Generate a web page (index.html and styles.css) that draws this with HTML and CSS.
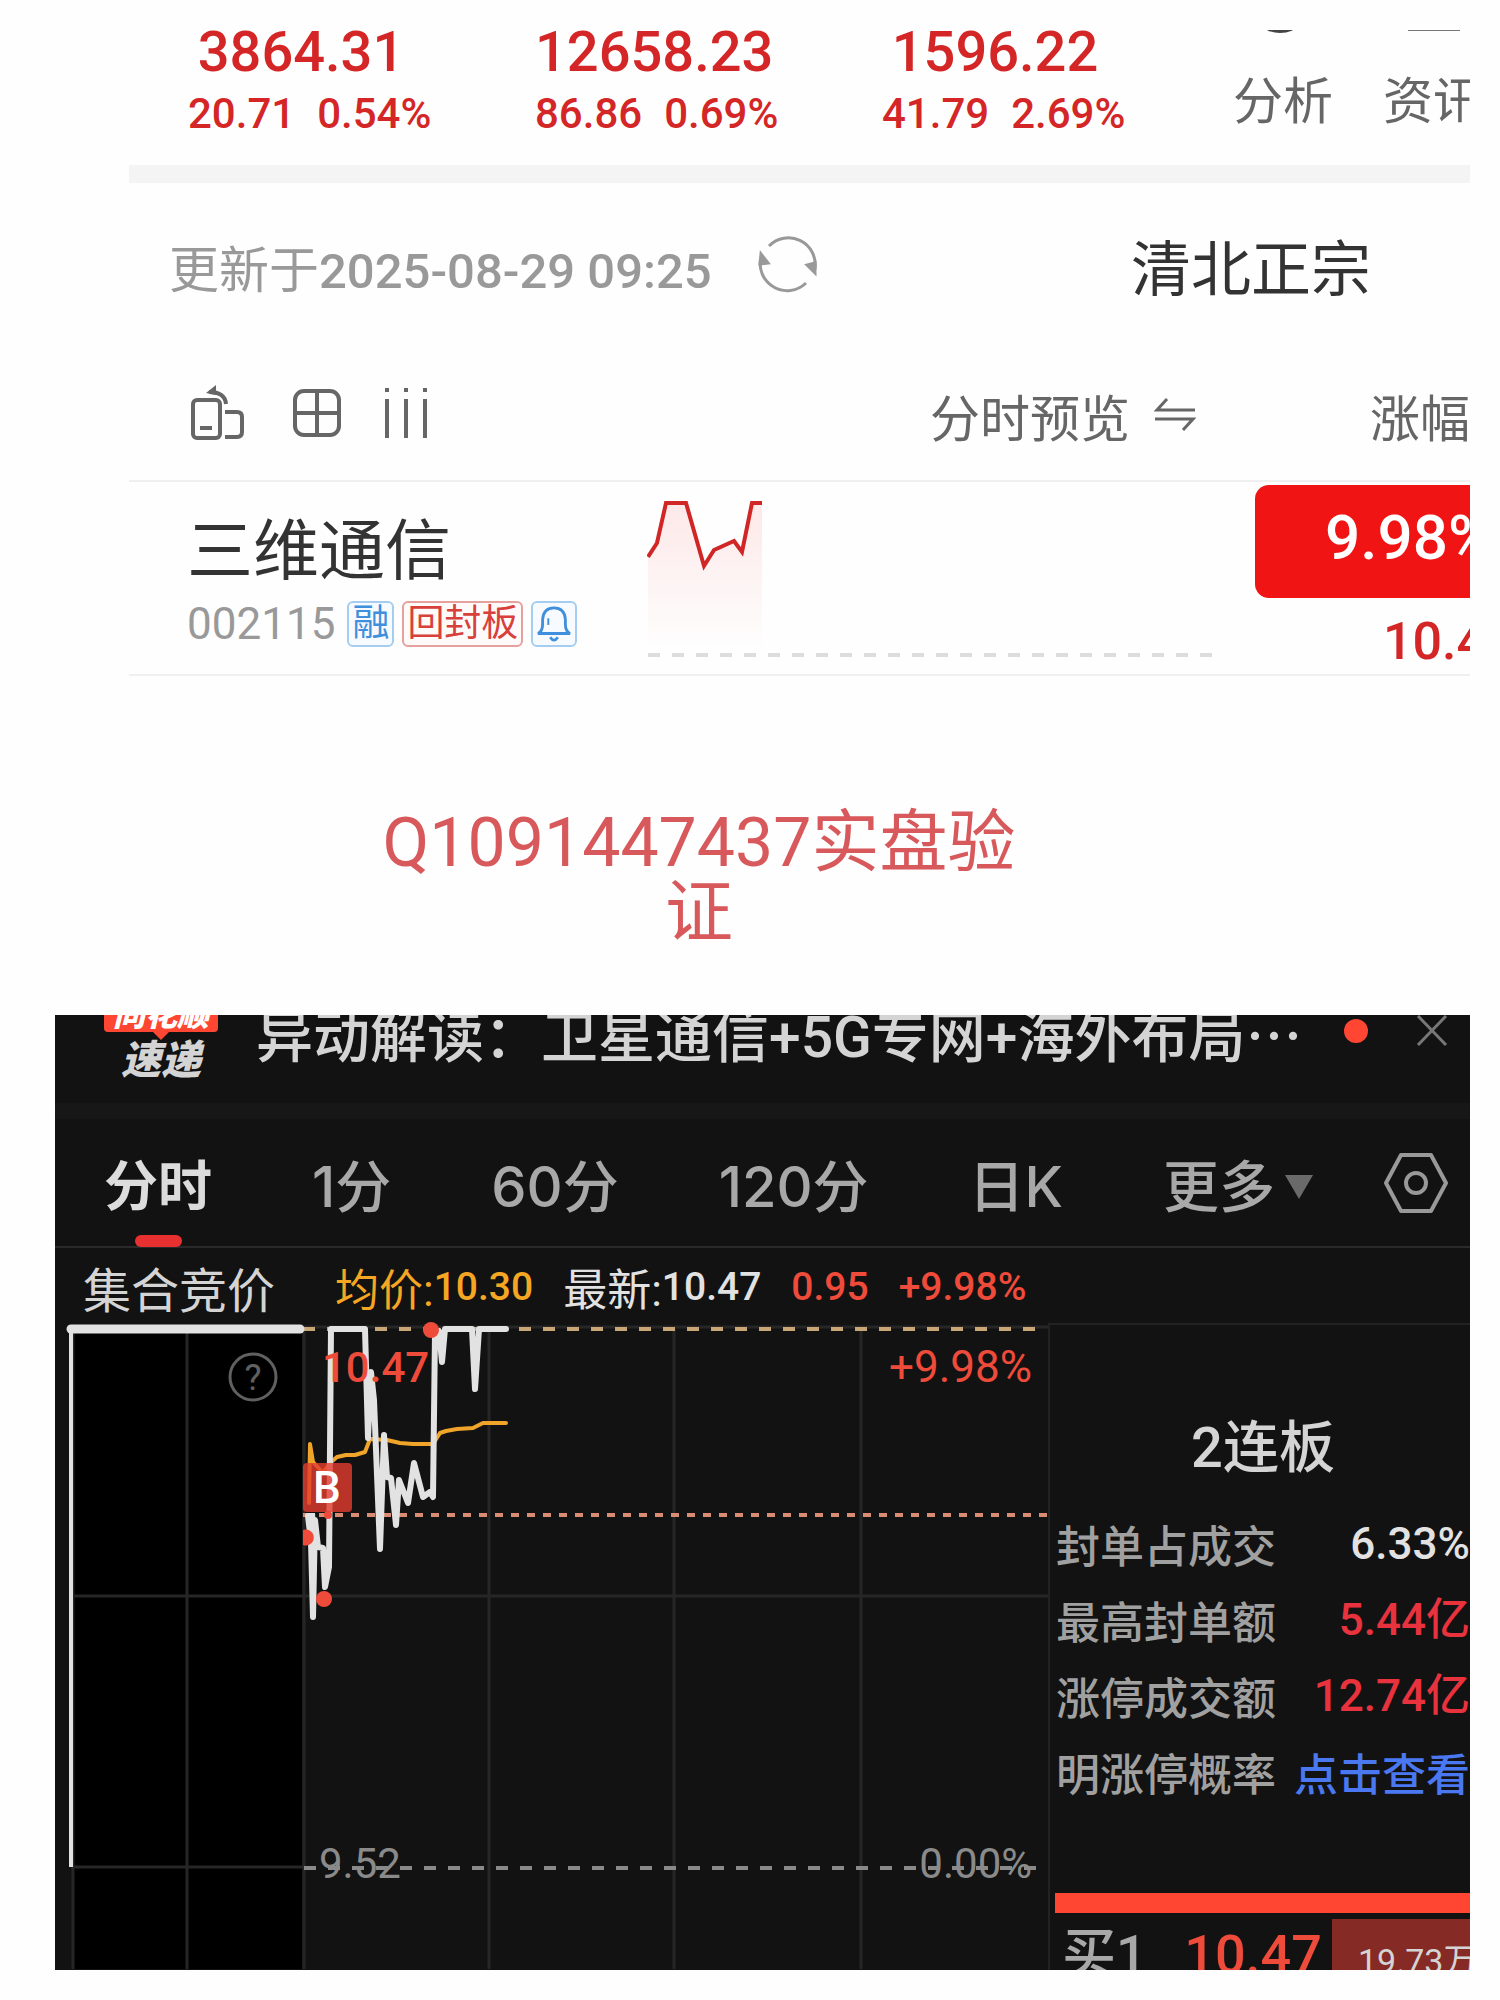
FILE: index.html
```html
<!DOCTYPE html>
<html lang="zh-CN">
<head>
  <meta charset="UTF-8">
  <meta name="viewport" content="width=device-width, initial-scale=1.0">
  <title>三维通信 002115</title>
  <link rel="stylesheet" href="styles.css">
</head>
<body>
  <div class="page">
    <section class="watchlist">
      <div class="market">
        <div class="index">
          <div class="index-value">3864.31</div>
          <div class="index-change"><span>20.71</span><span>0.54%</span></div>
        </div>
        <div class="index">
          <div class="index-value">12658.23</div>
          <div class="index-change"><span>86.86</span><span>0.69%</span></div>
        </div>
        <div class="index">
          <div class="index-value">1596.22</div>
          <div class="index-change"><span>41.79</span><span>2.69%</span></div>
        </div>
        <a class="shortcut" href="#">
          <svg width="60" height="5" viewBox="0 0 60 5"><circle cx="30" cy="-28" r="31" fill="#444"/></svg>
          分析
        </a>
        <a class="shortcut" href="#">
          <svg width="60" height="5" viewBox="0 0 60 5"><path d="M8 0H60" stroke="#777" stroke-width="2"/></svg>
          资讯
        </a>
      </div>

      <div class="update">
        <span class="update-time">更新于<b>2025-08-29 09:25</b></span>
        <button class="icon-btn" aria-label="刷新">
          <svg width="60" height="58" viewBox="0 0 60 58" fill="none" stroke="#999" stroke-width="3">
            <path d="M11 11A27 27 0 0 1 57 34"/>
            <path d="M48 48A27 27 0 0 1 3 22"/>
            <path d="M49 30L57 38L57 28Z" fill="#999"/>
            <path d="M10 28L3 19L2 29Z" fill="#999"/>
          </svg>
        </button>
        <span class="group-name">清北正宗</span>
      </div>

      <div class="columns">
        <button class="icon-btn" aria-label="横屏">
          <svg width="54" height="56" viewBox="0 0 54 56" fill="none" stroke="#666" stroke-width="4">
            <rect x="2" y="15" width="27" height="38" rx="4"/>
            <path d="M9 43H21M34 27H46Q51 27 51 32V47Q51 52 46 52H34"/>
            <path d="M18 7Q34 7 35 19"/>
            <path d="M25 0L15 8L25 10Z" fill="#666" stroke="none"/>
          </svg>
        </button>
        <button class="icon-btn" aria-label="宫格">
          <svg width="48" height="48" viewBox="0 0 48 48" fill="none" stroke="#666" stroke-width="4">
            <rect x="2" y="2" width="44" height="44" rx="9"/>
            <path d="M24 2V46M2 24H46"/>
          </svg>
        </button>
        <button class="icon-btn" aria-label="列设置">
          <svg width="46" height="50" viewBox="0 0 46 50" stroke="#666" stroke-width="4">
            <path d="M4 0V4M23 0V4M42 0V4M4 11V50M23 11V50M42 11V50"/>
          </svg>
        </button>
        <button class="column-name preview">分时预览
          <svg width="42" height="34" viewBox="0 0 42 34" fill="none" stroke="#666" stroke-width="3">
            <path d="M13 1L3 12H41M1 21H39L29 32"/>
          </svg>
        </button>
        <button class="column-name change">涨幅</button>
      </div>

      <div class="stock">
        <div class="stock-info">
          <div class="stock-name">三维通信</div>
          <div class="stock-tags">
            <span class="code">002115</span>
            <span class="tag blue">融</span>
            <span class="tag red">回封板</span>
            <span class="tag blue">
              <svg width="36" height="40" viewBox="0 0 38 40" fill="none" stroke="#3f8fdc" stroke-width="3">
                <path d="M2 30Q7 28 7 20V15Q8 3 19 3Q30 3 31 15V20Q31 28 36 30Z"/>
                <path d="M15 34Q19 40 23 34"/>
                <path d="M13 14V21" stroke-width="2"/>
              </svg>
            </span>
          </div>
        </div>
        <svg class="spark" viewBox="0 0 566 160">
          <defs>
            <linearGradient id="fade" x1="0" y1="0" x2="0" y2="1">
              <stop offset="0" stop-color="#fde8e8"/>
              <stop offset="1" stop-color="#fefefe"/>
            </linearGradient>
          </defs>
          <path fill="url(#fade)" d="M1 57L10 43L19 3H39L57 66L67 50L87 41L95 52L105 3H115V150H1Z"/>
          <path fill="none" stroke="#d02626" stroke-width="4" d="M1 57L10 43L19 3H39L57 66L67 50L87 41L95 52L105 3H115"/>
          <path stroke="#ddd" stroke-width="4" stroke-dasharray="12 12" d="M1 155H566"/>
        </svg>
        <div class="stock-quote">
          <div class="rise">9.98%</div>
          <div class="price">10.47</div>
        </div>
      </div>
    </section>

    <p class="caption">Q1091447437实盘验证</p>

    <section class="detail">
      <div class="news">
        <div class="news-logo">
          <div class="bubble">同花顺</div>
          <div class="express">速递</div>
        </div>
        <a class="news-title" href="#">异动解读：卫星通信+5G专网+海外布局<span class="dots">…</span></a>
        <span class="dot"></span>
        <button class="icon-btn" aria-label="关闭">
          <svg width="32" height="36" viewBox="0 0 32 36" stroke="#777" stroke-width="3"><path d="M2 1L30 30M30 1L2 30"/></svg>
        </button>
      </div>

      <nav class="tabs">
        <button class="tab active">分时</button>
        <button class="tab">1分</button>
        <button class="tab">60分</button>
        <button class="tab">120分</button>
        <button class="tab">日K</button>
        <button class="tab more">更多
          <svg width="28" height="25" viewBox="0 0 28 25"><path d="M0 1H28L14 25Z" fill="#6a6a6a"/></svg>
        </button>
        <button class="icon-btn settings" aria-label="设置">
          <svg width="64" height="62" viewBox="0 0 64 62" fill="none" stroke="#999" stroke-width="4">
            <path d="M17 3H47L62 31L47 59H17L2 31Z" stroke-linejoin="round"/>
            <circle cx="32" cy="31" r="10"/>
          </svg>
        </button>
      </nav>

      <div class="summary">
        <span class="auction">集合竞价</span>
        <span class="avg">均价:<b>10.30</b></span>
        <span class="last">最新:<b>10.47</b></span>
        <b class="up">0.95</b>
        <b class="up">+9.98%</b>
      </div>

      <div class="board">
        <svg class="chart" viewBox="0 0 993 649">
          <rect x="18" y="9" width="229" height="641" fill="#000"/>
          <path class="grid" d="M18 7H993M18 276H993M18 547H250M18 9V650M132 9V650M249 9V650M434 9V650M619 9V650M806 9V650"/>
          <path d="M248 9H986" stroke="#c9a676" stroke-width="4" stroke-dasharray="12 12"/>
          <path d="M248 195H993" stroke="#d98c74" stroke-width="4" stroke-dasharray="8 8"/>
          <path d="M249 548H982" stroke="#8a8a8a" stroke-width="4" stroke-dasharray="12 12"/>

          <path d="M16 9V547" stroke="#e2e2e2" stroke-width="4"/>
          <path d="M16 9H245" stroke="#e2e2e2" stroke-width="9" stroke-linecap="round"/>

          <polyline class="line avg-line" points="254,183 255,124 258,142 268,153 275,143 282,137 291,135 300,135 310,132 315,119 332,120 345,123 358,124 378,124 385,113 391,111 402,109 418,108 428,103 451,103"/>
          <path d="M251 193H260L262 228H256Z" fill="#e2e2e2"/>
          <polyline class="line price-line" points="253,196 256,222 258,297 260,200 263,227 268,228 270,267 274,247 276,9 310,9 313,118 316,52 319,80 325,229 329,115 332,157 336,158 341,205 344,160 353,183 359,143 368,177 375,172 378,177 380,13 384,11 387,42 390,9 417,9 420,69 424,9 451,9"/>

          <g fill="#ee4b3b">
            <circle cx="376" cy="10" r="8"/>
            <circle cx="269" cy="279" r="8"/>
            <path d="M248 210A8 8 0 1 1 248 225Z"/>
            <circle cx="273" cy="195" r="4"/>
          </g>
          <rect x="248" y="143" width="49" height="49" rx="4" fill="#e43c2e" fill-opacity="0.8"/>
          <text class="buy" x="272" y="183" text-anchor="middle">B</text>

          <circle cx="198" cy="57" r="23" fill="none" stroke="#606060" stroke-width="3"/>
          <text class="help" x="198" y="70" text-anchor="middle">?</text>
          <text class="limit high" x="267" y="62">10.47</text>
          <text class="limit" x="977" y="62" text-anchor="end">+9.98%</text>
          <text class="base" x="264" y="558">9.52</text>
          <text class="base" x="977" y="558" text-anchor="end">0.00%</text>
        </svg>

        <aside class="side">
          <h2>2连板</h2>
          <dl>
            <div><dt>封单占成交</dt><dd>6.33%</dd></div>
            <div><dt>最高封单额</dt><dd class="hot">5.44亿</dd></div>
            <div><dt>涨停成交额</dt><dd class="hot">12.74亿</dd></div>
            <div><dt>明涨停概率</dt><dd><a href="#">点击查看</a></dd></div>
          </dl>
          <div class="ratio"></div>
          <div class="order">
            <span class="order-side">买1</span>
            <span class="order-price">10.47</span>
            <span class="order-amount">19.73万</span>
          </div>
        </aside>
      </div>
    </section>
  </div>
</body>
</html>
```
FILE: styles.css
```css
* { box-sizing: border-box; }
body { margin: 0; background: #fefefe; font-family: Roboto, "Noto Sans CJK SC", sans-serif; color: #333; }
button { padding: 0; border: none; background: none; font: inherit; color: inherit; cursor: pointer; }
a { color: inherit; text-decoration: none; }
b { font-weight: 500; }
svg { display: block; flex: none; }
.page { padding: 30px 30px 30px 55px; }

/* watchlist */
.watchlist { margin-left: 74px; overflow-x: clip; white-space: nowrap; }
.market { display: flex; height: 153px; border-bottom: 18px solid #f4f4f4; color: #d42626; font-weight: 500; }
.index { flex: 0 0 347px; padding-left: 59px; }
.index-value { width: 226px; font-size: 56px; line-height: 44px; text-align: center; }
.index-change { display: flex; gap: 22px; padding-top: 16px; font-size: 42px; line-height: 48px; }
.shortcut { flex: none; width: 150px; color: #666; font-size: 50px; line-height: 66px; font-weight: 400; }
.shortcut svg { margin: 0 0 34px 17px; }
.market .index:nth-child(3) { flex-basis: 410px; }

.update { display: flex; align-items: center; height: 172px; padding: 0 0 10px 40px; }
.update-time { padding-top: 3px; color: #999; font-size: 50px; }
.update-time b { font-size: 49px; }
.update .icon-btn { margin-left: 46px; }
.group-name { margin-left: auto; padding-right: 99px; font-size: 60px; }

.columns { display: flex; align-items: center; height: 127px; padding: 0 0 9px 62px; border-bottom: 2px solid #f0f0f0; color: #666; font-size: 50px; }
.columns .icon-btn + .icon-btn { margin-left: 48px; }
.columns .icon-btn:nth-child(3) { margin-left: 42px; }
.column-name { padding-top: 3px; }
.preview { display: flex; align-items: center; gap: 24px; margin-left: auto; }
.change { margin: 0 0 0 174px; }

.stock { display: flex; height: 194px; border-bottom: 2px solid #f0f0f0; }
.stock-info { flex: 0 0 518px; padding-left: 58px; }
.stock-name { padding-top: 30px; font-size: 66px; line-height: 80px; }
.stock-tags { display: flex; gap: 8px; padding-top: 9px; line-height: 46px; }
.code { margin-right: 4px; color: #999; font-size: 44px; }
.tag { display: flex; align-items: center; height: 46px; padding: 0 3px; border: 2px solid; border-radius: 6px; font-size: 37px; }
.tag.blue { color: #3f8fdc; border-color: #a5cdf0; background: #f7fbff; }
.tag.red { color: #d8403c; border-color: #e6a09d; background: #fffafa; }
.spark { width: 566px; height: 160px; margin-top: 18px; }
.stock-quote { flex: 1; margin-left: 42px; }
.rise { height: 113px; margin: 3px 0 7px; padding-left: 70px; border-radius: 14px 0 0 14px; background: #f01414; color: #fff; font-size: 62px; font-weight: 500; line-height: 106px; }
.price { padding-left: 128px; color: #d42626; font-size: 52px; font-weight: 500; line-height: 74px; }

.caption { max-width: 660px; margin: 132px 0 67px 314px; color: #d8595c; font-size: 68px; line-height: 70px; text-align: center; word-break: break-all; }

/* detail */
.detail { overflow: hidden; background: #121212; color: #d4d4d4; white-space: nowrap; }
.news { display: flex; height: 104px; padding: 0 22px 0 49px; border-bottom: 16px solid #171717; }
.news-logo { width: 114px; font-style: italic; font-weight: 900; text-align: center; }
.bubble { height: 17px; border-radius: 0 0 4px 4px; background: #ff4632; color: #fff; font-size: 32px; line-height: 0; }
.bubble::after { content: ""; display: block; width: 0; margin: 17px auto 0; border: 8px solid transparent; border-top-color: #ff4632; }
.express { font-size: 40px; line-height: 58px; }
.news-title { margin-left: 38px; font-size: 57px; font-weight: 500; line-height: 34px; }
.dots { font-family: "Noto Sans CJK SC", sans-serif; }
.dot { width: 24px; height: 24px; margin: 4px 48px 0 auto; border-radius: 50%; background: #ff4632; }
.news .icon-btn { align-self: flex-start; }

.tabs { display: flex; align-items: center; height: 129px; padding: 0 22px 0 49px; border-bottom: 2px solid #2a2a2a; color: #a8a8a8; font-family: Inter, "Noto Sans CJK SC", sans-serif; font-size: 56px; font-weight: 500; }
.tab { position: relative; margin-right: 100px; padding-top: 8px; line-height: 80px; }
.tab.active { color: #dcdcdc; font-size: 54px; font-weight: 700; }
.tab.active::after { content: ""; position: absolute; left: 31px; bottom: -20px; width: 47px; height: 12px; border-radius: 6px; background: #e93030; }
.tab.more { display: flex; align-items: center; gap: 10px; margin-right: 0; }
.settings { margin-left: auto; }

.summary { display: flex; align-items: center; height: 72px; padding: 5px 0 0 28px; font-size: 44px; }
.summary b { font-size: 39px; line-height: 48px; }
.auction { margin-right: 60px; font-size: 48px; }
.avg, .last { display: flex; align-items: center; }
.avg { margin-right: 30px; color: #f5a623; }
.last { margin-right: 30px; color: #e2e2e2; }
.up { margin-right: 30px; color: #ee4b3b; }

.board { display: grid; grid-template-columns: 993fr 422fr; }
.chart { width: 100%; font-size: 44px; }
.grid { fill: none; stroke: #262626; stroke-width: 3; }
.line { fill: none; stroke-linejoin: round; stroke-linecap: round; }
.avg-line { stroke: #f0a52a; stroke-width: 4; }
.price-line { stroke: #e2e2e2; stroke-width: 6; }
.buy { fill: #fff; font-weight: 500; }
.help { fill: #606060; font-size: 36px; }
.limit { fill: #ee4b3b; }
.high { font-size: 42px; font-weight: 500; }
.base { fill: #8a8a8a; font-size: 42px; }

.side { display: flex; flex-direction: column; margin-top: 3px; border: solid #222; border-width: 2px 0 0 2px; }
.side h2 { margin: 83px 0 22px 6px; font-size: 56px; font-weight: 500; line-height: 80px; text-align: center; }
.side dl { margin: 0; padding-left: 6px; font-size: 44px; line-height: 76px; }
.side dl div { display: flex; justify-content: space-between; height: 76px; }
.side dt { color: #a0a0a0; font-weight: 500; }
.side dd { margin: 0; color: #e2e2e2; font-weight: 500; line-height: 68px; }
.side .hot { color: #e8323e; }
.side dd a { color: #4a78f0; line-height: 76px; }
.ratio { height: 20px; margin: 79px 0 6px 5px; background: #ff4632; }
.order { display: flex; height: 51px; overflow: hidden; padding-left: 12px; font-size: 54px; line-height: 72px; }
.order-side { color: #a8a8a8; font-weight: 500; }
.order-price { margin: 0 10px 0 auto; color: #ee4b3b; font-weight: 500; }
.order-amount { width: 138px; padding-left: 26px; overflow: hidden; background: #852a24; color: #d4d4d4; font-size: 34px; line-height: 84px; }
```
